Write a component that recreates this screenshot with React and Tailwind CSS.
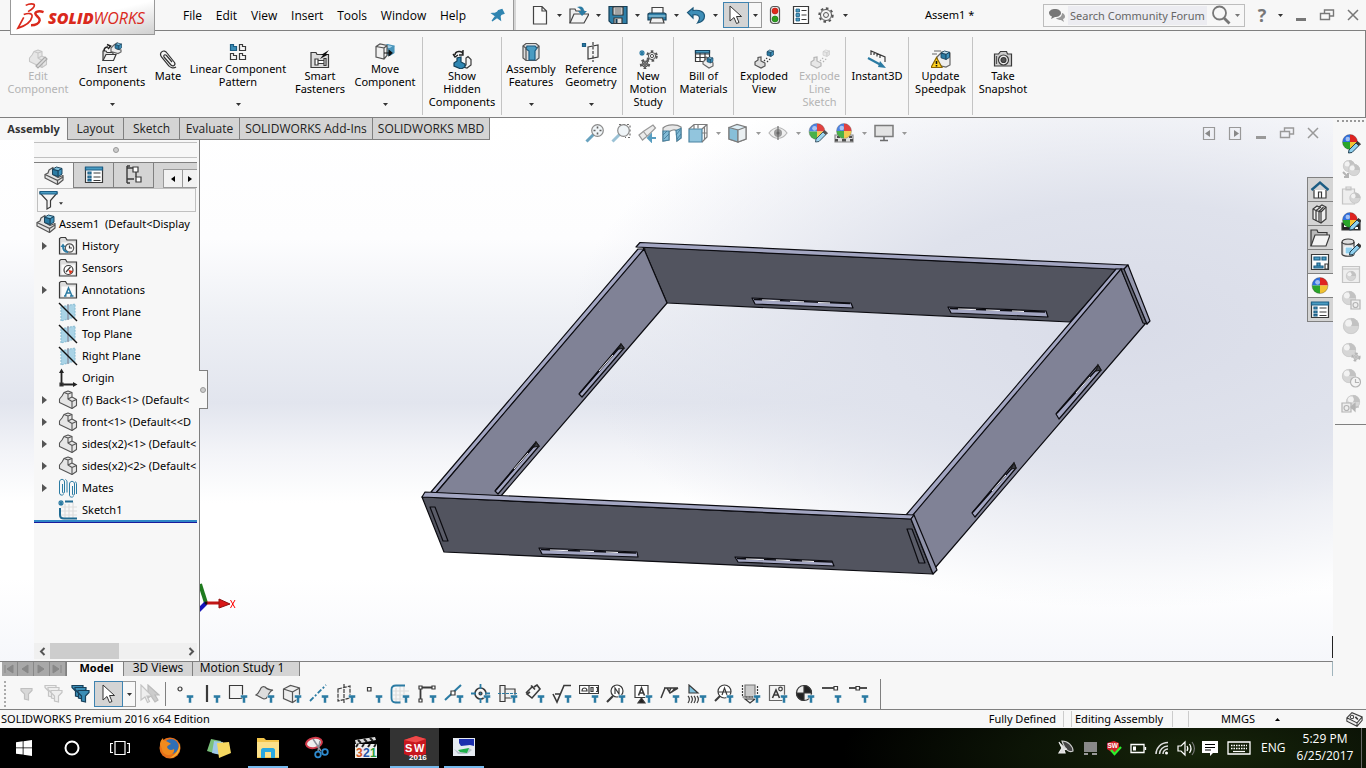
import React from "react";

const UI = "font-['Open_Sans','Noto_Sans',sans-serif]";

/* ---------- small building blocks ---------- */

function Icon({ children, className = "w-5 h-5", box = "0 0 20 20" }) {
  return (
    <svg viewBox={box} className={"shrink-0 " + className} fill="none" stroke="#3a3a3a" strokeWidth="1.2" aria-hidden="true">
      {children}
    </svg>
  );
}

function Caret({ color = "#333", className = "w-[19px]" }) {
  return (
    <span className={"flex justify-center items-center shrink-0 " + className}>
      <svg viewBox="0 0 5 3" className="w-[5px] h-[3px]" aria-hidden="true">
        <path d="M0 0h5L2.500 3z" fill={color} />
      </svg>
    </span>
  );
}

function Cube({ x = 0, y = 0, s = 1, top = "#7fc0dc", left = "#2b7ba3", right = "#3f93bd", line = "#17405a" }) {
  return (
    <g transform={`translate(${x} ${y}) scale(${s})`} stroke={line} strokeWidth="1" strokeLinejoin="round">
      <path d="M0 2.500 4 0l6 1.500L6 4z" fill={top} />
      <path d="M0 2.500 6 4v6L0 8z" fill={left} />
      <path d="M6 4l4-2.500v6L6 10z" fill={right} />
    </g>
  );
}

function PartShape({ fill = "#e6e6e6", line = "#555" }) {
  return (
    <g stroke={line} strokeWidth="1.100" strokeLinejoin="round">
      <path d="M1.500 9l2.500-3 2-3.500L10 1l4 1.500v4.500l4.500 2.500v6L14 18.500 1.500 12.500z" fill={fill} />
      <path d="M6 2.500l4 1.500 4-1.500M10 4v5l4 2.500v7M10 9l4-2M14 11.500l4.500-2" fill="none" />
    </g>
  );
}

function AssemblyGlyph() {
  return (
    <>
      <path d="M1 8.500l3-1.500 1-3 4-2.500v7l5 3 5-2v4.500L13.500 18.500 1 12z" fill="#e4e4e4" stroke="#555" strokeLinejoin="round" />
      <path d="M1 8.500l12.500 6v4M13.500 14.500l5.500-3.500" stroke="#555" />
      <Cube x={8.5} y={1} s={0.95} />
    </>
  );
}

function Ball({ cx = 10, cy = 9, r = 7, gray = false }) {
  if (gray) {
    return (
      <g stroke="none">
        <circle cx={cx} cy={cy} r={r} fill="#d6d6d6" />
        <path d={`M${cx} ${cy}V${cy - r}A${r} ${r} 0 0 1 ${cx + r} ${cy}z`} fill="#c2c2c2" />
        <circle cx={cx - r * 0.3} cy={cy - r * 0.35} r={r * 0.42} fill="#f2f2f2" />
        <circle cx={cx} cy={cy} r={r - 0.3} stroke="#c4c4c4" strokeWidth="0.600" />
      </g>
    );
  }
  return (
    <g stroke="none">
      <path d={`M${cx} ${cy}V${cy - r}A${r} ${r} 0 0 0 ${cx - r} ${cy}z`} fill="#2f6fe0" />
      <path d={`M${cx} ${cy}V${cy - r}A${r} ${r} 0 0 1 ${cx + r} ${cy}z`} fill="#df2320" />
      <path d={`M${cx} ${cy}V${cy + r}A${r} ${r} 0 0 1 ${cx - r} ${cy}z`} fill="#2aa52a" />
      <path d={`M${cx} ${cy}V${cy + r}A${r} ${r} 0 0 0 ${cx + r} ${cy}z`} fill="#f1c232" />
      <circle cx={cx - r * 0.3} cy={cy - r * 0.4} r={r * 0.3} fill="#ffffff" opacity="0.550" />
      <circle cx={cx} cy={cy} r={r} stroke="#333" strokeOpacity="0.450" strokeWidth="0.700" />
    </g>
  );
}

const Pencil = () => (
  <g strokeWidth="1">
    <path d="M9 15l7-7 3 2.500-7 7-3.500.500z" fill="#8fd0ee" stroke="#1f3f52" />
    <path d="M16 8l1.500-1.500 3 2.500-1.500 1.500z" fill="#333" />
  </g>
);

const Glass = ({ color = "#4f93b5" }) => (
  <>
    <path d="M8.500 11.500L1.500 18.500" stroke={color} strokeWidth="3" />
    <circle cx="12.500" cy="7.500" r="5.800" fill="#eef4f7" stroke="#777" />
  </>
);

function PointerIcon() {
  return (
    <Icon className="w-5 h-5">
      <path d="M4 1v15l4-3.500 2.500 6 2.500-1-2.500-6h5z" fill="#fff" stroke="#333" strokeWidth="1" />
    </Icon>
  );
}

/* ---------- title bar ---------- */

const menus = ["File", "Edit", "View", "Insert", "Tools", "Window", "Help"];

const quick = [
  { name: "New", art: <path d="M3.500 1.500h8.500l4.500 4.500v13h-13zM12 1.500V6h4.500" fill="#fafafa" stroke="#444" /> },
  {
    name: "Open",
    art: (
      <>
        <path d="M1 18V4h5l1 2h8v3" fill="#eee" stroke="#444" />
        <path d="M1 18l4-9h15l-5 9z" fill="#f4f4f4" stroke="#444" />
        <path d="M8 2c4-1.500 7 0 7 4h3l-5 5-4-5h3c0-2-2-3-4-4z" fill="#2b7ba3" stroke="none" />
      </>
    ),
  },
  {
    name: "Save",
    art: (
      <>
        <path d="M1 1.500h18v17H3.500L1 16z" fill="#2f7fa8" stroke="#173f57" />
        <path d="M5 2h10v8H5z" fill="#f2f2f2" stroke="#333" />
        <path d="M6.500 4h7M6.500 6h7M6.500 8h7" stroke="#555" />
        <path d="M6 13h8v5.500H6z" fill="#ddd" />
        <path d="M7.500 14h2v4h-2z" fill="#173f57" stroke="none" />
      </>
    ),
  },
  {
    name: "Print",
    art: (
      <>
        <path d="M5 8V2.500h11V8" fill="#fafafa" stroke="#444" />
        <path d="M1 9l1.500-1h15L19 9v6H1z" fill="#2f7fa8" stroke="#173f57" />
        <path d="M1.500 11h17" stroke="#9ccbe0" />
        <path d="M4.500 13h11l1.500 5H3z" fill="#f2f2f2" stroke="#444" />
      </>
    ),
  },
  { name: "Undo", art: <path d="M7 3L1.500 7.500 7 13V9.800c4-.8 6.500.700 6.500 3.200 0 1.500-.500 3-2 5 4.500-1 7-4 7-7 0-4.500-5-6.500-11.500-5.500z" fill="#3f8fb8" stroke="#1d587a" /> },
];

function Logo() {
  return (
    <a
      href="#home"
      aria-label="SOLIDWORKS"
      className="relative z-10 w-[145px] h-[35px] shrink-0 flex items-center pl-[5px] pb-[2px] border border-t-0 border-[#999] bg-linear-to-br from-white from-50% to-[#d0d0d0] text-[#da291c]"
    >
      <svg viewBox="0 0 30 30" className="w-[29px] h-[29px] shrink-0" fill="none" stroke="#da291c" aria-hidden="true">
        <path d="M10 3.500c4-2 9-2 9 0s-2.500 4-6.500 6.500" strokeWidth="1.700" />
        <path d="M8 13c5-2 9.500-1.500 8.500 2.500-1 5-6.500 9-14.500 11.500l6-11" strokeWidth="1.700" />
        <path d="M28.500 10.500c-4-1.500-8.500-1-8.500 1.500s5 4 4.500 7c-.5 2.800-4 5-9 5" strokeWidth="2.600" />
      </svg>
      <span className="ml-[3px] mt-[3px] text-[16px] leading-4 italic font-['Open_Sans',sans-serif]">
        <b className="font-extrabold">SOLID</b>
        <span className="font-normal">WORKS</span>
      </span>
    </a>
  );
}

function WindowButtons({ color, className }) {
  return (
    <div className={"flex items-center " + className}>
      <button aria-label="Minimize"><Icon className="w-4 h-4 block" box="0 0 16 16"><path d="M3 12.500h10" stroke={color} strokeWidth="3" /></Icon></button>
      <button aria-label="Restore"><Icon className="w-4 h-4 block" box="0 0 16 16"><path d="M5.500 6V3h9v6h-4M1.500 6.500h9v6h-9z" stroke={color} strokeWidth="1.400" /></Icon></button>
      <button aria-label="Close"><Icon className="w-4 h-4 block" box="0 0 16 16"><path d="M3 3l10 10M13 3L3 13" stroke={color} strokeWidth="1.500" /></Icon></button>
    </div>
  );
}

function TitleBar() {
  return (
    <header className="flex h-[31px] pl-[10px] border-b border-[#808080] items-start">
      <Logo />
      <div className="flex h-[30px] items-center flex-1 min-w-0">
        <nav className="flex justify-between pl-7 w-[311px] shrink-0 text-[12px] pt-px">
          {menus.map((m) => <button key={m}>{m}</button>)}
        </nav>
        <button aria-label="Pin menu" className="ml-6">
          <Icon className="w-4 h-4 block" box="0 0 16 16">
            <path d="M8.500 3.500L12 2.500l2 4-3 1-1 2 .500 3.500-3.500-2.500L2 14l3.500-5L2 6.500 5.500 6l2-1z" fill="#2f84b0" stroke="#2f84b0" />
          </Icon>
        </button>
        <div className="ml-[7px] w-[3px] h-[30px] bg-[#9a9a9a] border-r-2 border-[#d5d5d5]" />
        <div className="flex items-center pl-[14px]">
          {quick.map((q) => (
            <React.Fragment key={q.name}>
              <button aria-label={q.name}><Icon className="w-5 h-5 block">{q.art}</Icon></button>
              <Caret />
            </React.Fragment>
          ))}
          <button aria-label="Select" className="-ml-[2px] w-[26px] h-[26px] flex items-center justify-center bg-[#d4d4d4] border border-[#3f83b0]"><PointerIcon /></button>
          <button aria-label="Select options" className="w-[13px] h-[26px] flex items-center justify-center border border-l-0 border-[#999]"><Caret className="w-2" /></button>
          <button aria-label="Rebuild" className="ml-[3px]">
            <Icon className="w-5 h-5 block">
              <rect x="5.500" y="1.500" width="9" height="17" rx="3" fill="#eee" stroke="#555" />
              <circle cx="10" cy="6" r="3" fill="#e02a1a" stroke="#a00" strokeWidth="0.500" />
              <circle cx="10" cy="14" r="3" fill="#2e9e1e" stroke="#060" strokeWidth="0.500" />
            </Icon>
          </button>
          <button aria-label="File properties" className="ml-[6px]">
            <Icon className="w-5 h-5 block">
              <path d="M2.500 1.500h15v17h-15z" fill="#fff" />
              <path d="M5 4h3.500v3H5zM5 8.500h3.500v3H5zM5 13h3.500v3H5z" fill="#4a9cc2" stroke="#1c5d84" strokeWidth="0.800" />
              <path d="M10.500 5.500h5M10.500 10h5M10.500 14.500h5" />
            </Icon>
          </button>
          <button aria-label="Options" className="ml-[5px]"><Icon className="w-5 h-5 block"><Gear /></Icon></button>
          <Caret />
        </div>
        <h1 className="ml-[70px] pt-px text-[11px] font-['Noto_Sans',sans-serif] whitespace-nowrap">Assem1 *</h1>
        <div className="flex-1" />
        <form className="flex items-center w-[202px] h-[23px] border border-[#bdbdbd] px-1 shrink-0">
          <Icon className="w-[18px] h-4" box="0 0 18 16">
            <path d="M7 2c3 0 6 1.500 6 4s-3 4-6 4L3 12l1-2.500C2.500 9 1 7.500 1 6c0-2.500 3-4 6-4z" fill="#777" stroke="none" />
            <path d="M14 6c2 .500 3 2 3 3.500S16 12 15 12l1 3-3-2c-2 0-4-.500-5-2 4 0 6-2 6-5z" fill="#999" stroke="none" />
          </Icon>
          <input aria-label="Search Community Forum" placeholder="Search Community Forum" className="w-[139px] h-[19px] ml-[2px] pl-[2px] bg-[#ececf1] text-[11px] font-['Noto_Sans',sans-serif] placeholder:text-[#666] outline-none" />
          <button type="button" aria-label="Search" className="ml-1"><Icon className="w-5 h-5 block"><circle cx="8.500" cy="8" r="6.500" stroke="#777" strokeWidth="1.800" /><path d="M13 13l5.500 5.500" stroke="#777" strokeWidth="2.800" /></Icon></button>
          <Caret color="#777" className="w-3" />
        </form>
        <button aria-label="Help" className="w-5 ml-[7px] text-[18px] leading-5 font-bold text-[#777]">?</button>
        <Caret className="w-4" />
        <WindowButtons color="#777" className="gap-[10px] ml-[5px] mr-[5px]" />
      </div>
    </header>
  );
}

function Gear({ cx = 10, cy = 10, r = 5.5, fill = "#f4f4f4", line = "#555" }) {
  return (
    <g>
      <circle cx={cx} cy={cy} r={r + 1.2} stroke={line} strokeWidth="2" strokeDasharray="2.600 2.600" />
      <circle cx={cx} cy={cy} r={r} fill={fill} stroke={line} strokeWidth="1" />
      <circle cx={cx} cy={cy} r={r * 0.45} stroke={line} strokeWidth="1" />
    </g>
  );
}

/* ---------- ribbon ---------- */

const ribbon = [
  [
    { lines: ["Edit", "Component"], w: "w-[76px]", off: true, art: <g><PartShape fill="#e6e6e6" line="#c6c6c6" /><path d="M8 17l9-9 2 2-9 9z" fill="#ddd" stroke="#aaa" /></g> },
    { lines: ["Insert", "Components"], w: "w-[72px]", drop: true, art: <><path d="M1 18.500V9h3l1 1.500h6v2" fill="#ddd" /><path d="M1 18.500l3-6h10l-2.500 6z" fill="#f5f5f5" /><path d="M2 9c0-3 2-4 4-4M5 2.500L8.500 4 6 7" stroke="#222" strokeWidth="1.600" /><path d="M9 6l3-3 3-2v6l4 1v2l-3 1.500-7-2z" fill="#eee" stroke="#666" /><Cube x={13} y={1} s={0.65} /></> },
    { lines: ["Mate"], w: "w-[40px]", art: <path d="M6 8l7 8c2 2 5 0 3.500-2.500L9 4C6-.500.500 3.500 3.500 8l7.500 9c1.500 2 5 2.500 7 1M6 8c-1-2 1-3 2.500-1.500L14 13" stroke="#333" strokeWidth="1.200" /> },
    { lines: ["Linear Component", "Pattern"], w: "w-[100px]", drop: true, art: <><path d="M2.500 2.500h3v2h3v4h-6z" fill="#3a8db6" stroke="#1c5d84" /><path d="M11.500 2.500h3v2h3v4h-6zM2.500 11.500h3v2h3v4h-6zM11.500 11.500h3v2h3v4h-6z" fill="#f5f5f5" /></> },
    { lines: ["Smart", "Fasteners"], w: "w-[64px]", art: <><path d="M1 18.500v-15h5l1 2h11.500v13z" fill="#ddd" /><path d="M5 10h3v6H5zM8 11.500h6v3H8zM14 9.500h2v7h-2z" fill="#fff" /><path d="M19 1l-8 5h2l-3 4 9-5h-3l3-4z" fill="#111" stroke="none" /></> },
    { lines: ["Move", "Component"], w: "w-[66px]", drop: true, art: <><Cube x={8} y={2.5} s={1.1} top="#9fd0e8" left="#6fb3d3" right="#4a95bb" line="#4a95bb" /><path d="M1 4.500l4-2.500 7 1.500v10L9 17l-8-2zM1 4.500l8 1.500v11M9 6l3-2.500" fill="#f0f0f0" stroke="#555" /><path d="M9 11h6M14 8.500l3 2.500-3 2.500z" fill="#111" stroke="#111" /></> },
  ],
  [{ lines: ["Show", "Hidden", "Components"], w: "w-[78px]", art: <><path d="M11 18l3-2V9l2-1.500 3 3V16l-4 3z" fill="#f4f4f4" /><path d="M2 14l3-2V9l4-1v5l4 2v3l-4 2-7-3z" fill="#2f86b2" stroke="#123f58" /><path d="M3 6c0-4 7-5 8-1M11 1v5H7M1 5l2 3 3-2" stroke="#222" strokeWidth="1.400" /></> }],
  [
    { lines: ["Assembly", "Features"], w: "w-[58px]", drop: true, art: <><path d="M2 4l3-2.500h10L18 4v12l-3 2.500H5L2 16z" fill="#ddd" stroke="#555" /><path d="M6 4h8l2 2-2 3v9H8V9L5 7z" fill="#4a9cc2" stroke="#1c5d84" /><path d="M2 4l3 2v12M18 4l-2 2" stroke="#555" /></> },
    { lines: ["Reference", "Geometry"], w: "w-[62px]", drop: true, art: <><path d="M1.500 1.500h3v3h-3z" fill="#2b7ba3" stroke="#1c5d84" /><path d="M7 5l10-2v12L7 17z" fill="#f4f4f4" /><path d="M12 0v20" strokeDasharray="3 1.500" /></> },
  ],
  [{ lines: ["New", "Motion", "Study"], w: "w-[50px]", art: <><Gear cx={14} cy={7} r={3.6} /><Gear cx={7} cy={15} r={3} fill="#999" /><path d="M4 1v6M1 4h6M2 2l4 4M6 2L2 6" stroke="#2b7ba3" /></> }],
  [{ lines: ["Bill of", "Materials"], w: "w-[59px]", art: <><path d="M1.500 1.500h14v11h-14zM1.500 5h14M1.500 8.500h14M6 3v9M11 3v9" fill="#fff" /><path d="M1.500 1.500h14v2.500h-14z" fill="#4a9cc2" stroke="#17405a" /><path d="M9 13l3-3v-2l3 1 4 5v3l-4 2-6-4z" fill="#eee" stroke="#666" /><Cube x={13} y={8} s={0.6} /></> }],
  [
    { lines: ["Exploded", "View"], w: "w-[60px]", art: <><path d="M1 13l3-2V8.500L7 8v4l4 2v3l-4 2-6-3z" fill="#ddd" stroke="#555" /><path d="M10 12l4-4M13 13l4-4" strokeDasharray="1.500 1.500" /><Cube x={13} y={1} s={0.65} /></> },
    { lines: ["Explode", "Line", "Sketch"], w: "w-[51px]", off: true, art: <g opacity="0.350"><path d="M1 13l3-2V8.500L7 8v4l4 2v3l-4 2-6-3z" fill="#ccc" /><path d="M10 12l4-4M13 13l4-4" strokeDasharray="1.500 1.500" /><Cube x={13} y={1} s={0.65} top="#ddd" left="#ccc" right="#bbb" line="#777" /></g> },
  ],
  [{ lines: ["Instant3D"], w: "w-[62px]", art: <><path d="M4 6V2l14 6v5M7 3v3M10 4.500v3M13 6v3" /><path d="M1 9l13 7" stroke="#2b7ba3" strokeWidth="2.200" /><path d="M13 12l6 7-8-1z" fill="#2b7ba3" stroke="none" /></> }],
  [{ lines: ["Update", "Speedpak"], w: "w-[63px]", art: <><path d="M3 2h7M1 5h5M6 8l5-5 8 1v12l-4 2-9-2z" fill="#eee" stroke="#666" /><Cube x={10} y={2} s={0.85} top="#c8e4f0" /><path d="M5.500 8.500L11 18.500H0z" fill="#ffd21f" stroke="#8a6500" /><path d="M5.500 12v3M5.500 16v1.500" stroke="#111" strokeWidth="1.600" /></> }],
  [{ lines: ["Take", "Snapshot"], w: "w-[60px]", art: <><path d="M1.500 5h4l2-2.500h6l1 2.500h4v12h-17z" fill="#ccc" /><circle cx="10.500" cy="11" r="5" fill="#eee" /><circle cx="10.500" cy="11" r="2.500" fill="#555" /><path d="M3.500 7v8" stroke="#555" /></> }],
];

function RibbonButton({ item }) {
  return (
    <button
      className={"flex flex-col items-center shrink-0 " + item.w + (item.drop ? " pt-[11px]" : " pt-[18px]") + (item.off ? " text-[#b4b4b4]" : "")}
    >
      <Icon>{item.art}</Icon>
      <span className="text-[11px] leading-[13px] whitespace-nowrap font-['Noto_Sans',sans-serif]">
        {item.lines.map((l) => <span key={l} className="block">{l}</span>)}
      </span>
      {item.drop && <Caret className="w-5 mt-[15px]" />}
    </button>
  );
}

function Ribbon() {
  return (
    <div className="flex h-[87px] border-b border-r border-[#808080]">
      {ribbon.map((group, i) => (
        <div key={i} className="flex items-start">
          {group.map((it) => <RibbonButton key={it.lines[0]} item={it} />)}
          {i < ribbon.length - 1 && <div className={"w-px h-[78px] mt-[6px] bg-[#c4c4c4] " + (i === 0 ? "ml-1" : "")} />}
        </div>
      ))}
    </div>
  );
}

/* ---------- 3D scene ---------- */

const slotsFlat = [
  "752,298 851,303 853,308 755,304",
  "948,307 1046,311 1048,317 951,313",
  "539,548 637,552 638,557 542,554",
  "735,557 832,561 834,566 738,562",
];
const slotsSide = ["536,442 539,446 498,494 495,491", "621,344 624,348 582,397 579,394", "1014,463 1016,468 975,517 972,513", "1098,365 1101,370 1059,419 1056,414"];

function Scene() {
  return (
    <svg viewBox="0 118 1333 543" preserveAspectRatio="xMidYMid slice" className="absolute inset-0 w-full h-full" role="img" aria-label="Frame assembly">
      <g stroke="#0b0b10" strokeWidth="1.200" strokeLinejoin="round">
        <polygon points="643,247 1118,269 1070,322 667,303" fill="#52545f" />
        <polygon points="636,247 640,242.500 1128,265 1124,269.500" fill="#a3a6c2" />
        <polygon points="431,492 638,249 645,249 436,493" fill="#a3a6c2" />
        <polygon points="436,493 644,249 667,303 501,496" fill="#808296" />
        <polygon points="906,515 1116,269 1122,269 913,516" fill="#a3a6c2" />
        <polygon points="912,516 1121,269 1145,324 935,568" fill="#808296" />
        <polygon points="1121,269 1125,269 1147,324 1143,323" fill="#646674" />
        <polygon points="1124,269 1128,265 1150,321 1147,324" fill="#9497ae" />
        {slotsSide.map((p) => <polygon key={p} points={p} fill="#a3a6c2" />)}
        <polygon points="422,497 911,519 933,574 444,552" fill="#52545f" />
        <polygon points="422,497 425,492 914,515 911,519" fill="#a3a6c2" />
        <polygon points="911,519 914,515 937,570 933,574" fill="#8f92a9" />
        {slotsFlat.map((p) => <polygon key={p} points={p} fill="#a3a6c2" />)}
        <polygon points="430,507 435,507 448,541 443,541" fill="#5a5c68" />
        <polygon points="907,529 912,529 925,563 919,563" fill="#5a5c68" />
      </g>
      <g stroke="#0b0b10" strokeWidth="1.400">
        <path d="M754 299.500l96 4M950 308.500l95 3.500M541 549.500l95 3.500M737 558.500l95 3.500" />
        <path d="M535 445l-39 45M620 347l-40 46M1013 467l-40 45M1097 369l-40 44" />
      </g>
      <g stroke="#f4f4f8" strokeWidth="1">
        <path d="M762 300l18 .800M790 301.300l14 .600M818 302.500l12 .500M958 309l18 .700M986 310l14 .600M1012 311l12 .500M550 550l18 .700M580 551l14 .600M606 552l12 .500M746 559l18 .700M776 560l14 .600M802 561l12 .500" />
        <path d="M528 453l-14 16M613 355l-14 16M1006 475l-14 16M1090 377l-14 16" />
      </g>
      <g stroke="#1a1a1a" strokeWidth="1.200" fill="#3b3c46">
        <path d="M536 442l3 4-5 1zM621 344l3 4-5 1zM1014 463l2 5-5 1zM1098 365l3 5-5 1z" />
      </g>
      <path d="M206 603l-6-19" stroke="#1e7a1e" strokeWidth="4" />
      <path d="M206 603l-8 8" stroke="#1515b8" strokeWidth="4" />
      <path d="M206 603h14" stroke="#c01515" strokeWidth="3" />
      <path d="M219 599l11 5-11 4z" fill="#d81818" stroke="#901010" />
      <circle cx="206" cy="603" r="1.500" fill="#111" />
      <path d="M230.500 600l4.500 8M235 600l-4.500 8" stroke="#f00" />
      <path d="M1332.500 636v22" stroke="#222" />
    </svg>
  );
}

/* ---------- feature manager ---------- */

const folder = (inner) => (
  <>
    <path d="M1.500 18V2.500l1.500-1h4.500l1.500 2.500h9.500v14z" fill="#ddd" />
    <path d="M3.500 6.500h13.500v10h-13.500z" fill="#fafafa" stroke="none" />
    {inner}
  </>
);
const plane = (
  <>
    <path d="M3 5l14-3v13L3 19z" fill="#a9d3e6" stroke="#8fc0d6" strokeDasharray="2 1" />
    <path d="M10 2v16" stroke="#889" />
    <path d="M1 1l18 18" stroke="#111" strokeWidth="1.500" />
  </>
);

const tree = [
  { t: "History", open: true, art: folder(<><circle cx="11.500" cy="12" r="4.200" stroke="#555" /><path d="M11.500 9.500V12H14" /><path d="M5 10c0 4 2 6 5 6" stroke="#2b7ba3" strokeWidth="2" /><path d="M2.500 11L5 7.500 7.500 11z" fill="#2b7ba3" stroke="none" /></>) },
  { t: "Sensors", art: folder(<><circle cx="10.500" cy="12" r="4.500" fill="#fff" /><path d="M10.500 12l4.500 1-3 3.500z" fill="#e0341a" stroke="none" /><path d="M8 14l4.500-5" /></>) },
  { t: "Annotations", open: true, art: folder(<path d="M6 16h2.500M12 16h3.500M7.200 16L10.500 8l3.500 8M8.500 13h4" stroke="#2b7ba3" strokeWidth="1.500" />) },
  { t: "Front Plane", art: plane },
  { t: "Top Plane", art: plane },
  { t: "Right Plane", art: plane },
  { t: "Origin", art: <><path d="M3.500 4v12.500H16" stroke="#222" strokeWidth="1.800" /><path d="M1 5l2.500-4.500L6 5zM15 14l4.500 2.500L15 19z" fill="#222" stroke="none" /><path d="M2 15h3v3H2z" fill="#222" /></> },
  { t: "(f) Back<1> (Default<", open: true, art: <PartShape /> },
  { t: "front<1> (Default<<D", open: true, art: <PartShape /> },
  { t: "sides(x2)<1> (Default<", open: true, art: <PartShape /> },
  { t: "sides(x2)<2> (Default<", open: true, art: <PartShape /> },
  { t: "Mates", open: true, art: <path d="M4.500 6v8c0 1.500 2 1.500 2 0V4c0-3.500-5-3.500-5 0v11c0 2.500 3 2.500 4 1.500M14.500 8v8c0 1.500 2 1.500 2 0V6c0-3.500-5-3.500-5 0v11c0 2.500 3 2.500 4 1.500M9 14.500V4c0-1-.500-2-1.500-2.500M18.500 16V6c0-1-.500-2-1.500-2.500" stroke="#2b7ba3" strokeWidth="1" /> },
  { t: "Sketch1", art: <><path d="M7 4v14M11 4v14M15 2v16M3 7h16M3 11h16M3 15h16" stroke="#ddd" /><path d="M7 1.500h8M2 8v7c0 2 1.500 3.500 4 3.500h13" stroke="#1f6a92" strokeWidth="2" /><path d="M3 0v6M0 3h6M1 1l4 4M5 1L1 5" stroke="#2b7ba3" /></> },
];

const listGlyph = (
  <>
    <path d="M1.500 2.500h17v15h-17z" fill="#fff" />
    <path d="M1.500 2h17v3h-17z" fill="#4a9cc2" stroke="#1c5d84" />
    <path d="M4 7h3v2H4zM4 11h3v2H4zM4 14.500h3v1.500H4z" fill="#4a9cc2" stroke="#1c5d84" />
    <path d="M9.500 8h7M9.500 12h7M9.500 15.500h7" />
  </>
);

function FeatureManager() {
  return (
    <aside className="ml-[34px] w-[166px] flex-1 min-h-0 flex flex-col pr-[2px] bg-[#f7f7f7] border-r border-[#808080] relative">
      <div className="mt-[2px] h-4 border-y border-[#c0c0c0] flex items-center justify-center shrink-0">
        <span className="w-[6px] h-[6px] rounded-full border border-[#999] bg-[#ccc]" />
      </div>
      <div className="mt-1 flex h-[26px] border-t border-[#808080] shrink-0 overflow-hidden" role="tablist">
        <button role="tab" aria-label="Feature tree" className="w-[39px] flex items-center justify-center"><Icon><AssemblyGlyph /></Icon></button>
        <button role="tab" aria-label="Properties" className="w-10 bg-[#d4d4d4] border-l border-b border-[#808080] flex items-center justify-center"><Icon>{listGlyph}</Icon></button>
        <button role="tab" aria-label="Configurations" className="w-10 bg-[#d4d4d4] border-l border-b border-[#808080] flex items-center justify-center">
          <Icon><path d="M3 1v17M3 3h7M3 14h7M3 1h3M3 18h3M12 7v5" strokeWidth="1.400" /><path d="M9 2h5v5H9zM12 12h5v5h-5z" fill="#fff" /></Icon>
        </button>
        <div className="flex-1 bg-[#d4d4d4] border-l border-[#808080] flex items-end justify-end">
          <button aria-label="Scroll left" className="w-5 h-[19px] border border-[#999] bg-[#f2f2f2] flex items-center justify-center"><svg viewBox="0 0 4 6" className="w-1 h-[6px]"><path d="M4 0v6L0 3z" /></svg></button>
          <button aria-label="Scroll right" className="w-[14px] h-[19px] border-y border-[#999] bg-[#f2f2f2] flex items-center justify-center"><svg viewBox="0 0 4 6" className="w-1 h-[6px]"><path d="M0 0v6l4-3z" /></svg></button>
        </div>
      </div>
      <button aria-label="Filter" className="ml-[3px] mr-px h-6 mb-px border border-[#c0c0c0] flex items-center pl-[1px] shrink-0">
        <Icon>
          <path d="M1 3h17l-6.500 7.500V17L8 19v-8.500z" fill="#f4f4f4" />
          <path d="M1 1.500h17v2.500H1z" fill="#4a9cc2" stroke="#1c5d84" />
        </Icon>
        <Caret className="w-1 mt-[7px]" />
      </button>
      <ul className="text-[11px] leading-[22px] h-[307px] whitespace-pre overflow-hidden shrink-0 font-['Noto_Sans',sans-serif]" role="tree">
        <li className="flex items-center h-[22px] pl-[2px]"><Icon><AssemblyGlyph /></Icon><span className="pl-[3px]">{"Assem1  (Default<Display"}</span></li>
        {tree.map((n, i) => (
          <li key={i} className="flex items-center h-[22px]">
            <span className="w-6 pl-2 shrink-0">
              {n.open && <svg viewBox="0 0 5 8" className="w-[5px] h-2 block"><path d="M0 0v8l5-4z" fill="#555" /></svg>}
            </span>
            <Icon>{n.art}</Icon>
            <span className="pl-1">{n.t}</span>
          </li>
        ))}
      </ul>
      <div className="h-[3px] bg-[#2f86c6] border-b border-[#1a1a9c] shrink-0" />
      <div className="flex-1 min-h-0" />
      <div className="h-4 mb-[2px] bg-[#f0f0f0] flex items-center shrink-0">
        <button aria-label="Scroll tree left" className="w-4 flex justify-center"><Icon className="w-[7px] h-[9px]" box="0 0 7 9"><path d="M5.500 1L2 4.500 5.500 8" strokeWidth="2" stroke="#555" /></Icon></button>
        <div className="w-[69px] h-4 bg-[#cdcdcd]" />
        <div className="flex-1" />
        <button aria-label="Scroll tree right" className="w-[9px]"><Icon className="w-[7px] h-[9px]" box="0 0 7 9"><path d="M1.500 1L5 4.500 1.500 8" strokeWidth="2" stroke="#555" /></Icon></button>
      </div>
      <button aria-label="Collapse panel" className="absolute left-full top-[230px] w-[9px] h-[39px] bg-[#f7f7f7] border border-l-0 border-[#808080] flex items-center justify-center">
        <span className="w-[6px] h-[6px] rounded-full border border-[#999] bg-[#ccc]" />
      </button>
    </aside>
  );
}

const commandTabs = [
  ["Layout", "w-[56px]"],
  ["Sketch", "w-[56px]"],
  ["Evaluate", "w-[60px]"],
  ["SOLIDWORKS Add-Ins", "w-[133px]"],
  ["SOLIDWORKS MBD", "w-[118px]"],
];

const hud = [
  { n: "Zoom to fit", art: <><Glass /><path d="M12.500 3.500v2M12.500 9.500v2M8.500 7.500h2M14.500 7.500h2" stroke="#444" strokeWidth="1.600" /></> },
  { n: "Zoom to area", art: <><path d="M8 1.500h11v13h-5" strokeDasharray="2 2" stroke="#555" /><Glass color="#8ab8cf" /></> },
  { n: "Previous view", art: <><path d="M2 12l5-4 9-6 2.500 3-7 7-6 5z" fill="#e8e8e8" stroke="#888" /><path d="M6 8l4 5" stroke="#888" /><path d="M19 15h-6M14 12L11 15l3 3z" fill="#3a8db6" stroke="#3a8db6" strokeWidth="2" /></> },
  { n: "Section view", art: <><path d="M1 5c4-4 14-4 18-1v11l-4 3V8c-2-2-6-1-8 1v8l-6 1z" fill="#e4e4e4" stroke="#777" /><path d="M1 8h6v9l-6 1zM14 7.500l5-2V15l-4 3z" fill="#6db0cf" stroke="#2b6f92" /><path d="M1 12l4-4M2 16l5-5M14 12l4-5M15 16l4-5" stroke="#1c5d84" strokeWidth="0.800" /></> },
  { n: "View orientation", drop: true, art: <><path d="M1 6h13v13H1z" fill="#7fbcd8" stroke="#2b6f92" /><path d="M1 6l5-4.500h13V14l-5 5M14 6l5-4.500M6 1.500V6M14 10h5M10 1.500v4M16.500 4v12" stroke="#666" /></> },
  { n: "Display style", drop: true, art: <><path d="M1 4.500l8-3 9 2.500v12l-8 3-9-3z" fill="#d8ecf5" stroke="#666" /><path d="M1 4.500L10 7v12l-9-3z" fill="#74b5d2" stroke="#666" /><path d="M10 7l8-3v12l-8 3z" fill="#e8eef1" stroke="#666" /></> },
  { n: "Hide or show items", drop: true, art: <><path d="M1 10c5-7 13-7 18 0-5 7-13 7-18 0z" fill="#eee" stroke="#aaa" /><circle cx="10" cy="10" r="4" fill="#888" stroke="none" /><circle cx="10" cy="10" r="1.500" fill="#444" stroke="none" /><path d="M10 3v14" stroke="#555" /></> },
  { n: "Edit appearance", art: <><Ball cx={9} cy={8.5} r={8} /><g transform="translate(-1 1)"><Pencil /></g></> },
  { n: "Apply scene", drop: true, art: <><path d="M1 12h18v7H1z" fill="#ddd" stroke="#777" /><path d="M3 13h3v2H3zM1 16h3v2.500H1zM15 13h3v2h-3zM16 16h3v2.500h-3zM8 16h4v2.500H8z" fill="#333" stroke="none" /><Ball cx={10} cy={8} r={7.5} /></> },
  { n: "View settings", drop: true, art: <><path d="M1 2.500h18v11H1z" fill="#e0e0e0" stroke="#666" strokeWidth="1.500" /><path d="M10 14v4M6 17.500h8" stroke="#555" strokeWidth="1.600" /></> },
];
const hudPad = ["", "ml-[6px]", "ml-[6px]", "ml-[5px]", "ml-[6px]", "", "", "", "ml-[6px]", ""];

function HeadsUp() {
  return (
    <div className="absolute top-[5px] left-[585px] flex items-center opacity-85" role="toolbar" aria-label="View">
      {hud.map((h, i) => (
        <React.Fragment key={h.n}>
          <button aria-label={h.n} className={hudPad[i]}><Icon className="w-5 h-5 block">{h.art}</Icon></button>
          {h.drop && <Caret color="#888" className="w-5" />}
        </React.Fragment>
      ))}
    </div>
  );
}

const paneTabs = [
  { n: "Resources", art: <><path d="M4 10v8h12v-8" fill="#fff" /><path d="M8.500 18v-6h3v6" /><path d="M1.500 10L10 2.500l8.500 7.500" stroke="#1c5d84" strokeWidth="2.400" /></> },
  { n: "Design library", art: <><path d="M3 5l4-3 2 1 3-2 2 1 2 1v12l-5 4-2-1-2-1-4-2z" fill="#eee" /><path d="M3 5l3 1.500V17M6 6.500l3 1V18M9 7.500l2 .500v11M11 8l5-5M6 6.500L11 3M9 7.500L13.500 3" /></> },
  { n: "File explorer", art: <><path d="M1 18V2h6l1 2.500h9V7" fill="#bbb" /><path d="M1 18L5 7h15l-4 11z" fill="#f4f4f4" /></> },
  { n: "View palette", art: <><path d="M1.500 2.500h17v15h-17z" fill="#fff" /><path d="M4 5h6v3H4zM12 5h4v3h-4zM4 14h9v2H4zM7 11h3v3H7z" fill="#4a9cc2" stroke="#1c5d84" /><path d="M15 12h3v5h-3z" /></> },
  { n: "Appearances", on: true, art: <Ball cx={10} cy={9.5} r={8} /> },
  { n: "Custom properties", art: listGlyph },
];

function TaskPane() {
  return (
    <div className="absolute right-0 top-[59px] w-[26px] border border-r-0 border-b-0 border-[#808080]">
      {paneTabs.map((p) => (
        <button key={p.n} aria-label={p.n} className={"w-full h-6 border-b border-[#808080] flex items-center pl-[2px] " + (p.on ? "bg-[#f7f7f7]" : "bg-[#d4d4d4]")}>
          <Icon>{p.art}</Icon>
        </button>
      ))}
    </div>
  );
}

function Viewport() {
  return (
    <section className="relative flex-1 min-w-0 flex flex-col overflow-hidden bg-[radial-gradient(ellipse_560px_280px_at_1130px_210px,#d9dce8_0%,#dfe2ec_45%,transparent_100%),linear-gradient(180deg,#fff_0px,#fdfdfe_120px,#eef0f5_200px,#e2e5ee_285px,#f3f4f8_335px,#fff_385px,#fff_460px,#f6f7fb_543px)]">
      <Scene />
      <div className="relative flex h-[22px] text-[12px] items-stretch w-max" role="tablist">
        <button role="tab" className="w-[67px] bg-[#f7f7f7] text-[11px] font-bold font-['Noto_Sans',sans-serif] text-[#333]">Assembly</button>
        {commandTabs.map(([t, w]) => (
          <button key={t} role="tab" className={"bg-[#d4d4d4] border-l border-b border-[#808080] last:border-r text-[#222] whitespace-nowrap " + w}>{t}</button>
        ))}
      </div>
      <FeatureManager />
      <HeadsUp />
      <div className="absolute top-[7px] right-[12px] flex items-center gap-[10px]">
        <button aria-label="Pane left"><Icon className="w-4 h-4 block" box="0 0 16 16"><path d="M2.500 2.500h11v12h-11z" stroke="#999" /><path d="M9 5v7L4 8.500z" fill="#888" stroke="none" /></Icon></button>
        <button aria-label="Pane right"><Icon className="w-4 h-4 block" box="0 0 16 16"><path d="M2.500 2.500h11v12h-11z" stroke="#999" /><path d="M7 5v7l5-3.500z" fill="#888" stroke="none" /></Icon></button>
        <WindowButtons color="#999" className="gap-[10px]" />
      </div>
      <TaskPane />
    </section>
  );
}

const renderTools = [
  { n: "Edit appearance", art: <><Ball cx={9} cy={8} r={7.5} /><g transform="translate(-1 1)"><Pencil /></g></> },
  { n: "Copy appearance", art: <><Ball gray cx={8} cy={6} r={6} /><Ball gray cx={13} cy={10} r={6} /><path d="M2 12l5 5M7 13v4H3" stroke="#b4b4b4" strokeWidth="2" /></> },
  { n: "Paste appearance", art: <><path d="M1.500 3h12v15h-12zM5 1h5v3H5z" fill="#eee" stroke="#c4c4c4" /><Ball gray cx={14} cy={12} r={5.5} /></> },
  { n: "Edit scene", art: <><path d="M1 11h18v7H1z" fill="#222" /><path d="M3 13h3v2H3zM14 15h3v2h-3z" fill="#fff" stroke="none" /><Ball cx={9} cy={8} r={7.5} /><Pencil /></> },
  { n: "Edit decal", art: <><path d="M1 4c0-4 12-4 12 0v12c0 3-12 3-12 0z" fill="#ddd" /><path d="M1 4c0 3 12 3 12 0" /><path d="M4 9h8v7H4z" fill="#8fd0ee" stroke="#fff" /><g transform="translate(0 -1)"><Pencil /></g></> },
  { n: "Integrated preview", art: <><path d="M1.500 2.500h17v16h-17zM1.500 5h17" fill="#eee" stroke="#c4c4c4" /><Ball gray cx={10} cy={12} r={5} /></> },
  { n: "Preview window", art: <><Ball gray cx={8} cy={8} r={7} /><path d="M10 10h9v9h-9z" fill="#eee" stroke="#b4b4b4" /><circle cx="14.500" cy="15" r="2.500" stroke="#b4b4b4" /></> },
  { n: "Final render", art: <Ball gray cx={10} cy={10} r={8} /> },
  { n: "Render options", art: <><Ball gray cx={8} cy={8} r={7} /><Gear cx={15} cy={15} r={2.4} fill="#ddd" line="#b4b4b4" /></> },
  { n: "Schedule render", art: <><Ball gray cx={8} cy={8} r={7} /><circle cx="14.500" cy="14" r="5" fill="#f4f4f4" stroke="#b4b4b4" /><path d="M14.500 11v3.500H18" stroke="#b4b4b4" /></> },
  { n: "Recall render", art: <><Ball gray cx={12} cy={8} r={7} /><path d="M1 9h9v9H1z" fill="#eee" stroke="#b4b4b4" /><circle cx="5.500" cy="14" r="2.500" stroke="#b4b4b4" /><path d="M18 13h-5M14 9.500L10 13l4 4z" fill="#b4b4b4" stroke="#b4b4b4" /></> },
];

function RenderBar() {
  return (
    <div className="w-[33px] shrink-0 pl-[2px]">
      <div className="h-[307px] border-b border-[#808080] flex flex-col items-center pt-[2px]">
        <div className="w-full h-[3px] ml-[3px] border-t-2 border-dotted border-[#999]" />
        <div className="mt-[11px] flex flex-col gap-[6px]">
          {renderTools.map((r) => <button key={r.n} aria-label={r.n}><Icon className="w-5 h-5 block">{r.art}</Icon></button>)}
        </div>
      </div>
    </div>
  );
}

/* ---------- bottom ---------- */

function ModelTabs() {
  const nav = ["M3 3v8M11 3v8L5 7z", "M10 3v8L4 7z", "M4 3v8l6-4z", "M3 3v8l6-4zM11 3v8"];
  return (
    <div className="flex h-[15px] border-t border-t-[#808080] text-[12px] leading-[12px] mr-[33px] border-r border-r-[#a0b4bc]">
      <div className="flex ml-[2px] bg-[#a8a8a8] border-r border-[#808080]">
        {nav.map((d, i) => (
          <button key={d} aria-label={["First", "Previous", "Next", "Last"][i]} className="w-4 h-[14px] border-r border-[#888]">
            <svg viewBox="0 0 14 14" className="w-[14px] h-[14px] block"><path d={d} fill="#888" stroke="#888" /></svg>
          </button>
        ))}
      </div>
      <button className="w-14 pl-[3px] pb-[2px] text-[11px] font-bold font-['Noto_Sans',sans-serif]">Model</button>
      <button className="w-[69px] pb-[2px] bg-[#d4d4d4] border-l border-[#808080]">3D Views</button>
      <button className="w-[108px] pb-[2px] bg-[#d4d4d4] border-x border-[#808080] pr-2">Motion Study 1</button>
    </div>
  );
}

const Badge = () => <path d="M12.500 11h7v3h-2v5h-3v-5h-2z" fill="#2b7ba3" stroke="#f7f7f7" strokeWidth="0.500" />;
const Funnel = ({ x = 0, y = 0, fill, line }) => (
  <path transform={`translate(${x} ${y})`} d="M1 1.500h11v2L8.500 7v6l-4-1V7L1 3.500z" fill={fill} stroke={line} />
);

const filterTools = [
  ["Vertices", <circle cx="6" cy="5" r="2" />],
  ["Edges", <path d="M6 1v17" strokeWidth="2.200" />],
  ["Faces", <path d="M1.500 1.500h13v13h-13z" fill="#f4f4f4" />],
  ["Surface bodies", <path d="M1 11c2-1 3-3 4-5 1-3 3-4 5-3 2 2 5 3 8 3-3 1-4 3-5 6-1 2-2 3-4 3-3-1-5-3-8-4z" fill="#ddd" stroke="#555" />],
  ["Solid bodies", <path d="M1.500 5l7-3.500 9 2.500v10l-7 4.500-9-4zM1.500 5l9 3v10.500M10.500 8l7-4" fill="#eee" stroke="#555" />],
  ["Axes", <path d="M1 17L17 1" stroke="#2b7ba3" strokeWidth="1.800" strokeDasharray="5 2 2 2" />],
  ["Planes", <path d="M2 5l12-3v12L2 17zM8 0v20" fill="#f4f4f4" strokeDasharray="4 1" />],
  ["Sketch points", <path d="M4.500 3.500h3.500v3.500H4.500z" fill="#fff" />],
  ["Sketches", <><path d="M6 4v14M10 2v16M14 2v12M3 7h16M3 11h16M3 15h12" stroke="#ddd" /><path d="M15 1.500H6c-3 0-4.500 1-4.500 4V14c0 3 1 4.500 4 4.500h5" stroke="#2b7ba3" strokeWidth="1.800" /></>],
  ["Sketch segments", <><path d="M3.500 3.500h13M3.500 3.500v13" strokeWidth="1.800" /><path d="M2 2h3v3H2zM15 2h3v3h-3zM2 15h3v3H2z" fill="#fff" /></>],
  ["Midpoints", <><path d="M1 16L17 1" stroke="#2b7ba3" strokeWidth="2" /><path d="M7 7h4v4H7z" fill="#fff" /></>],
  ["Center marks", <><circle cx="9.500" cy="9.500" r="5.500" strokeWidth="1.600" /><path d="M9.500 0v5M9.500 14v5M0 9.500h5M14 9.500h5" stroke="#2b7ba3" strokeWidth="1.800" /><circle cx="9.500" cy="9.500" r="1.500" fill="#2b7ba3" /></>],
  ["Centerlines", <><path d="M2 1.500h5v16H2zM7 5h10v9H7" fill="#eee" /><path d="M0 9.500h19" stroke="#2b7ba3" strokeDasharray="3 1" /></>],
  ["Dimensions", <path d="M1 9l7-7M6 1.500l4 4M9 3l3-2 3 4-8 9-5-4 3-2" strokeWidth="1.600" />],
  ["Surface finish", <path d="M1 10l4 8L12 1.500h7M3 10h5" strokeWidth="1.600" />],
  ["Tolerances", <><path d="M.500 1.500h19v8H.500zM10 1.500v8" fill="#fff" /><path d="M3 7c0-4 5-4 5 0zM12 3.500h2v4h-2zM17 3.500h1.500v4H17" /></>],
  ["Notes", <><circle cx="11" cy="7" r="6" fill="#fff" /><path d="M9 10V4l4 6V4" /><path d="M7 12l-6 6" strokeWidth="2.200" /></>],
  ["Datums", <><path d="M2 1.500h13v12H2z" fill="#fff" /><path d="M5.500 11.500L8.500 4l3 7.500M6.500 9h4" strokeWidth="1.600" /><path d="M8.500 14l3.500 5H5z" fill="#222" /></>],
  ["Welds", <path d="M1 14L5 4h2l3 5 8-5M4 4h14M9 8l2-4M12 8l3-4" strokeWidth="1.500" />],
  ["Weld beads", <><path d="M2 1v8h9z" fill="#7fc0dc" /><path d="M1 12c2 2 2 4 0 7M4 12c2 2 2 4 0 7M7 12c2 2 2 4 0 7M10 12c2 2 2 4 0 7" /></>],
  ["Datum targets", <><circle cx="10.500" cy="7.500" r="6.500" fill="#fff" /><path d="M4 8h13M8 11l2.500-7 2.500 7" /><path d="M6 12l-5 5" strokeWidth="2" /></>],
  ["Cosmetic threads", <><path d="M4 1h10v12H4z" fill="#ccc" stroke="#777" /><path d="M1.500 1v12h15V1" strokeDasharray="2 1" /><path d="M4 15l5 4 5-4z" fill="#eee" /></>],
  ["Blocks", <><path d="M1.500 1.500h15v15h-15z" fill="#f4f4f4" stroke="#666" /><path d="M4.500 14L8 6l3.500 8M5.500 11h5" strokeWidth="1.600" /><circle cx="12.500" cy="5" r="1.800" /></>],
  ["Center of mass", <><circle cx="9" cy="9" r="7.500" fill="#eee" /><path d="M9 9V1.500A7.500 7.500 0 0 1 16.500 9zM9 9v7.500A7.500 7.500 0 0 1 1.500 9z" fill="#222" /></>],
  ["Connection points", <><path d="M0 4h12" strokeWidth="1.800" /><path d="M12 2.500h3.500V6H12z" fill="#fff" /></>],
  ["Routing points", <><path d="M0 4h18" strokeWidth="1.800" /><path d="M7 2.500h3.500V6H7z" fill="#fff" /></>],
];

function FilterBar() {
  return (
    <div className="flex h-[34px] pt-[3px] items-center border-b border-[#808080]" role="toolbar" aria-label="Selection filter">
      <div className="ml-[4px] h-[26px] border-l-2 border-dotted border-[#aaa] w-[9px]" />
      <button aria-label="Toggle filter bar" className="w-[27px]"><Icon className="w-5 h-5 block mx-auto"><Funnel x={3} y={3} fill="#d8d8d8" line="#c0c0c0" /></Icon></button>
      <button aria-label="Clear filters" className="w-[27px] pl-[4px]"><Icon className="w-5 h-5 block"><Funnel x={0} y={0} fill="#eee" line="#c4c4c4" /><Funnel x={3} y={2} fill="#eee" line="#c4c4c4" /><Funnel x={6} y={5} fill="#eee" line="#c4c4c4" /></Icon></button>
      <button aria-label="Select all filters" className="w-[27px] pl-[4px]"><Icon className="w-5 h-5 block"><Funnel x={0} y={0} fill="#3a8db6" line="#17405a" /><Funnel x={3} y={2} fill="#3a8db6" line="#17405a" /><Funnel x={6} y={5} fill="#3a8db6" line="#17405a" /></Icon></button>
      <button aria-label="Select" className="w-[29px] h-[26px] flex items-center justify-center bg-[#d4d4d4] border border-[#3f83b0]"><PointerIcon /></button>
      <button aria-label="Select options" className="w-[13px] h-[26px] flex items-center justify-center border border-l-0 border-[#999]"><Caret className="w-2" /></button>
      <button aria-label="Inverse select" className="ml-1"><Icon className="w-5 h-5 block"><path d="M8 1v13l3-2 4 6 3-2-3-5h4z" fill="#ccc" stroke="#bbb" /><path d="M1 1v15l4-3 2.500 5.500 2-1-2.500-5.500h5z" fill="#eee" stroke="#c4c4c4" /></Icon></button>
      <div className="ml-[5px] mr-[4px] w-px h-6 bg-[#808080]" />
      <div className="flex">
        {filterTools.map(([n, art]) => (
          <button key={n} aria-label={"Filter " + n} className="w-[27px] flex justify-center"><Icon>{art}<Badge /></Icon></button>
        ))}
      </div>
      <div className="ml-[8px] w-px self-stretch bg-[#808080]" />
    </div>
  );
}

function StatusBar() {
  return (
    <footer className="flex h-[18px] items-center text-[11px] leading-[18px] pl-px whitespace-nowrap font-['Noto_Sans',sans-serif]">
      <span>SOLIDWORKS Premium 2016 x64 Edition</span>
      <div className="flex-1" />
      <span className="pr-[7px]">Fully Defined</span>
      <span className="w-[9px] h-4 border-x border-[#ccc]" />
      <span className="w-[100px] px-[3px]">Editing Assembly</span>
      <span className="w-[17px] h-4 border-x border-[#ccc]" />
      <button className="w-[98px] flex items-center pl-8">MMGS<span className="ml-5"><svg viewBox="0 0 5 3" className="w-[5px] h-[3px]"><path d="M0 3h5L2.500 0z" /></svg></span></button>
      <span className="w-[79px] flex justify-end pr-[3px]">
        <Icon className="w-[17px] h-[17px]"><path d="M1 8l6-6 12 5v4l-6 7-12-6zM1 8l12 6 6-7M13 14v4" fill="#eee" /><circle cx="7" cy="7" r="2" /><path d="M11 7l3 3" strokeWidth="2" /></Icon>
      </span>
    </footer>
  );
}

const tasks = [
  { n: "Firefox", art: <><circle cx="12" cy="12" r="10.500" fill="#e8701a" stroke="none" /><circle cx="13" cy="10.500" r="7.500" fill="#2f6fb5" stroke="none" /><path d="M2 8C2 5 4 3 5 2c0 2 1 3 3 3 2 1 4 2 5 3-2 1-3 1-4 3 1 3 4 4 7 2 1 3-2 6-5 6s-7-2-7-6z" fill="#f08a1e" stroke="none" /><path d="M22 7c1 8-3 14-10 15 5-3 9-7 10-15z" fill="#f7b731" stroke="none" /></> },
  { n: "Sticky Notes", art: <><path d="M4 3l10 2-4 13L0 15z" fill="#7ac07a" stroke="none" /><path d="M7 5l9 1-2 13-9-2z" fill="#9fc8ea" stroke="none" /><path d="M10 7l12-1 2 11-12 5z" fill="#f6d860" stroke="none" /></> },
  { n: "File Explorer", run: true, art: <><path d="M1 2h7l2 2h13v18H1z" fill="#f3c54b" stroke="none" /><path d="M1 6h22v15H1z" fill="#fbe08a" stroke="none" /><path d="M5 22v-8c0-1 1-2 2-2h10c1 0 2 1 2 2v8h-4v-6H9v6z" fill="#28a8e0" stroke="none" /></> },
  { n: "Snipping Tool", art: <><ellipse cx="9" cy="7" rx="8" ry="5" transform="rotate(-12 9 7)" fill="#eee" stroke="#d23a4a" strokeWidth="2" /><path d="M8 3l8 12M15 5l-2 10" stroke="#8a8f98" strokeWidth="1.500" /><circle cx="13" cy="18.500" r="2.800" stroke="#2e8bd0" strokeWidth="1.800" /><circle cx="20" cy="16" r="2.800" stroke="#2e8bd0" strokeWidth="1.800" /></> },
  { n: "Media Player Classic", art: <><path d="M1 8h22v14H1z" fill="#eee" stroke="none" /><path d="M1 4l20-3 1 3L2 8z" fill="#ddd" stroke="none" /><path d="M4 4l3 3M10 3l3 3M16 2l3 3M4 8l-2 3M10 8l-2 3M16 8l-2 3M22 8l-2 3" stroke="#222" strokeWidth="2" /><g fontFamily="Liberation Sans" fontWeight="bold" fontSize="12" stroke="none"><text x="2" y="21" fill="#d4551d">3</text><text x="9" y="21" fill="#2457a8">2</text><text x="16" y="21" fill="#2a9a3a">1</text></g></> },
  { n: "SOLIDWORKS 2016", active: true, art: <><path d="M1 4l12-4 10 3v15l-11 4L1 18z" fill="#c8171e" stroke="none" /><path d="M1 4l12-4 10 3-10 3.500z" fill="#ef4a4a" stroke="none" /><g fontFamily="Liberation Sans" fontWeight="bold" stroke="none" fill="#fff"><text x="2" y="16" fontSize="11">S</text><text x="11" y="16" fontSize="11">W</text><text x="6" y="24" fontSize="8">2016</text></g></> },
  { n: "Photo Viewer", run: true, art: <><path d="M1 2h22v18H1z" fill="#e6ebf2" stroke="none" /><path d="M7 3h15v7l-4-1-9 1-2-3z" fill="#1c2fae" stroke="none" /><path d="M2 13l5 3 10-4 3 2-5 4H6z" fill="#b9c4cc" stroke="none" /><path d="M6 14l11-2-2 5-7-1z" fill="#1fb04a" stroke="none" /></> },
];

const tray = [
  <><path d="M6 3c6 0 11 5 11 10-4 2-8-1-11-10z" fill="#444" stroke="#ccc" /><path d="M3 4l3 6-3 5h6l-1-3 3-1" fill="#ddd" stroke="#eee" /></>,
  <><path d="M4 4h13v10H4z" fill="#888" stroke="none" /><path d="M4 15h4v2H4zM12 15h5v2h-5z" fill="#999" stroke="none" /></>,
  <><path d="M3 5l7-2 5 2v7l-6 3-6-4z" fill="#d2202a" stroke="none" /><text x="3.500" y="10" fontSize="6.500" fontFamily="Liberation Sans" fontWeight="bold" fill="#fff" stroke="none">SW</text><path d="M7 12l3.500 4L17 9" stroke="#2ef02e" strokeWidth="2.200" /></>,
  <><path d="M3 6.500h13v8H3zM17.500 9v3" stroke="#fff" strokeWidth="1.300" /><path d="M5 8.500h3v4H5z" fill="#fff" stroke="none" /></>,
  <><path d="M4 16C4 10 9 4.500 16 4.500M7.500 16c0-4 3.500-8 8.500-8M11 16c0-2.500 2-5 5-5" stroke="#ddd" strokeWidth="1.500" /><circle cx="14.500" cy="15" r="1.500" fill="#fff" stroke="none" /></>,
  <><path d="M2 8h3l4-4v13l-4-4H2z" stroke="#fff" /><path d="M11 8c1 1.500 1 3.500 0 5M13.500 6c2 3 2 6 0 9" stroke="#fff" /><path d="M16 4c3 4 3 9 0 13" stroke="#777" /></>,
  <><path d="M2 3h16v12h-5l-3 3v-3H2z" fill="#fff" stroke="none" /><path d="M5 6.500h10M5 9.500h10M5 12h6" stroke="#000" /></>,
];

function Taskbar() {
  return (
    <div className="h-10 flex items-stretch bg-black bg-[radial-gradient(ellipse_360px_90px_at_88%_60%,#16240a_0%,#0c1406_50%,transparent_100%)] text-white text-[12px]">
      <button aria-label="Start" className="w-12 flex items-center justify-center"><svg viewBox="0 0 16 16" className="w-4 h-4"><path d="M0 2.200L6.700 1.300v6.200H0zM7.500 1.200L16 0v7.500H7.500zM0 8.300h6.700v6.300L0 13.700zM7.500 8.300H16V16l-8.500-1.200z" fill="#fff" /></svg></button>
      <button aria-label="Cortana" className="w-12 flex items-center justify-center"><svg viewBox="0 0 16 16" className="w-4 h-4"><circle cx="8" cy="8" r="6.500" fill="none" stroke="#fff" strokeWidth="2" /></svg></button>
      <button aria-label="Task view" className="w-12 flex items-center justify-center"><svg viewBox="0 0 20 16" className="w-5 h-4" fill="none" stroke="#fff" strokeWidth="1.200"><path d="M5 1.500h10v13H5zM3 3.500H.600v9H3M17 3.500h2.400v9H17" /></svg></button>
      <div className="flex ml-px">
        {tasks.map((t) => (
          <button key={t.n} aria-label={t.n} className={"w-[49px] flex flex-col items-center " + (t.active ? "bg-[#333]" : "")}>
            <span className="flex-1 flex items-center pt-px"><Icon className="w-6 h-6" box="0 0 24 24">{t.art}</Icon></span>
            <span className={"h-[2px] " + (t.active ? "w-full bg-[#76b9ed]" : t.run ? "w-10 bg-[#76b9ed]" : "w-10")} />
          </button>
        ))}
      </div>
      <div className="flex-1" />
      <div className="flex items-center gap-1">
        {tray.map((a, i) => <Icon key={i}>{a}</Icon>)}
        <Icon className="w-6 h-4 ml-[3px]" box="0 0 24 16"><path d="M1 2h22v12H1z" stroke="#fff" strokeWidth="1.300" /><path d="M4 5.500h16M4 8.500h16" stroke="#fff" strokeWidth="1.600" strokeDasharray="1.500 1" /><path d="M6 11.500h12" stroke="#fff" /></Icon>
      </div>
      <button className="ml-[10px] w-6">ENG</button>
      <button className="w-[72px] ml-[4px] leading-[17px] text-center pb-[2px]">
        <span className="block">5:29 PM</span>
        <span className="block">6/25/2017</span>
      </button>
      <button aria-label="Show desktop" className="w-[5px] border-l border-[#666]" />
    </div>
  );
}

export default function App() {
  return (
    <div className={"min-h-screen flex flex-col bg-[#f7f7f7] text-black overflow-hidden " + UI}>
      <TitleBar />
      <Ribbon />
      <main className="flex flex-1 min-h-[543px]">
        <Viewport />
        <RenderBar />
      </main>
      <ModelTabs />
      <FilterBar />
      <StatusBar />
      <Taskbar />
    </div>
  );
}
